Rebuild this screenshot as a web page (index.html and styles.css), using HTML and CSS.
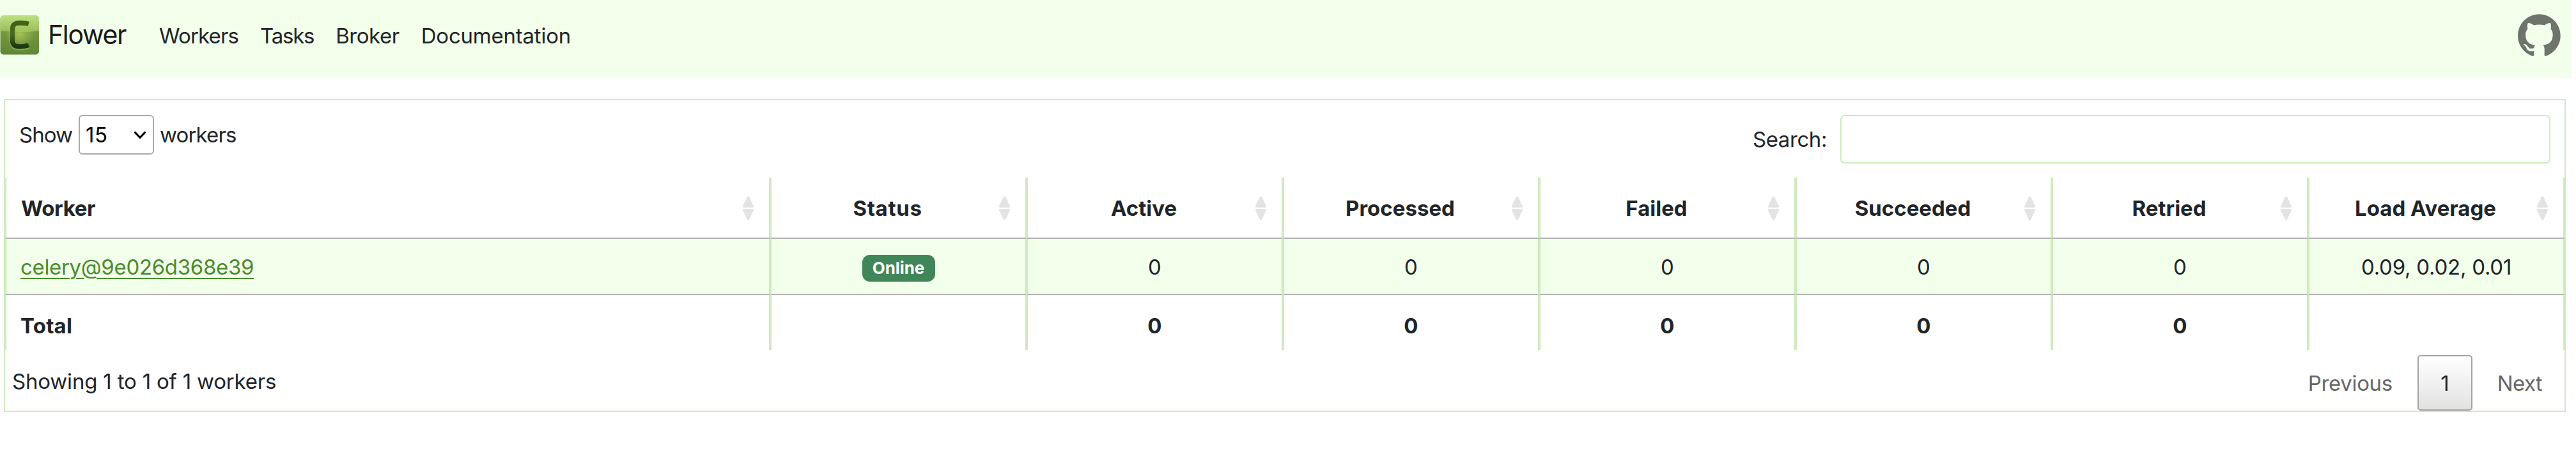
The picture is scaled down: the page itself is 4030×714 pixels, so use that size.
FILE: index.html
```
<!DOCTYPE html>
<html lang="en">
<head>
<meta charset="utf-8">
<title>Flower</title>
<link rel="stylesheet" href="styles.css">
</head>
<body>
<svg class="defs" aria-hidden="true">
  <symbol id="sort" viewBox="0 0 17 38">
    <path d="M8.5 2.5 15 16H2Z M8.5 35.5 15 22H2Z" fill="#e3e3e3" stroke="#e3e3e3" stroke-width="4" stroke-linejoin="round"/>
  </symbol>
</svg>
<nav class="navbar">
  <a class="brand" href="#">
    <svg class="logo" viewBox="0 0 62 64">
      <defs>
        <linearGradient id="top" x1="0" y1="0" x2="0" y2="1"><stop offset="0" stop-color="#bfe283"/><stop offset="1" stop-color="#98bc58"/></linearGradient>
        <linearGradient id="low" x1="0" y1="0" x2="0" y2="1"><stop offset="0" stop-color="#84a544"/><stop offset="1" stop-color="#5f8635"/></linearGradient>
        <radialGradient id="glow"><stop offset="0" stop-color="#aecb5c" stop-opacity=".8"/><stop offset="1" stop-color="#aecb5c" stop-opacity="0"/></radialGradient>
        <linearGradient id="ink" x1="0" y1="0" x2="0" y2="1"><stop offset="0" stop-color="#3f6118"/><stop offset=".45" stop-color="#4a6c20"/><stop offset="1" stop-color="#1f3710"/></linearGradient>
        <clipPath id="tile"><rect x=".5" y="1.5" width="60.5" height="61" rx="5"/></clipPath>
      </defs>
      <g clip-path="url(#tile)">
        <rect width="62" height="64" fill="url(#low)"/>
        <path d="M0 0H62V25Q31 29 0 25Z" fill="url(#top)"/>
        <ellipse cx="31" cy="31" rx="24" ry="19" fill="url(#glow)"/>
      </g>
      <path d="M44.8 15.5C40 14 36 14 31 14C22.5 14 19.5 17 19.5 24V41C19.5 48 22.5 51 31 51C36.5 51 40 50.5 44.8 48.5" fill="none" stroke="#a8cf62" stroke-opacity=".45" stroke-width="9.5"/>
      <path d="M44.8 14.5C40 13 36 13 31 13C22.5 13 19.5 16 19.5 23V40C19.5 47 22.5 50 31 50C36.5 50 40 49.5 44.8 47.5" fill="none" stroke="url(#ink)" stroke-width="7.5"/>
    </svg>
    <span class="brand-name">Flower</span>
  </a>
  <div class="links">
    <a class="t-workers" href="#">Workers</a>
    <a class="t-tasks" href="#">Tasks</a>
    <a class="t-broker" href="#">Broker</a>
    <a class="t-docs" href="#">Documentation</a>
  </div>
  <a class="github" href="#" aria-label="GitHub">
    <svg viewBox="0 0 98 96"><path fill="#6e746b" d="M48.854 0C21.839 0 0 22 0 49.217c0 21.756 13.993 40.172 33.405 46.690 2.427.490 3.316-1.059 3.316-2.362 0-1.141-.080-5.052-.080-9.127-13.590 2.934-16.420-5.867-16.420-5.867-2.184-5.704-5.420-7.170-5.420-7.170-4.448-3.015.324-3.015.324-3.015 4.934.326 7.523 5.052 7.523 5.052 4.367 7.496 11.404 5.378 14.235 4.074.404-3.178 1.699-5.378 3.074-6.600-10.839-1.141-22.243-5.378-22.243-24.283 0-5.378 1.940-9.778 5.014-13.200-.485-1.222-2.184-6.275.486-13.038 0 0 4.125-1.304 13.426 5.052a46.970 46.970 0 0 1 12.214-1.630c4.125 0 8.330.571 12.213 1.630 9.302-6.356 13.427-5.052 13.427-5.052 2.670 6.763.970 11.816.485 13.038 3.155 3.422 5.015 7.822 5.015 13.200 0 18.905-11.404 23.060-22.324 24.283 1.780 1.548 3.316 4.481 3.316 9.126 0 6.600-.080 11.897-.080 13.526 0 1.304.890 2.853 3.316 2.364 19.412-6.520 33.405-24.935 33.405-46.691C97.707 22 75.788 0 48.854 0z"/></svg>
  </a>
</nav>

<main class="panel">
  <div class="toolbar">
    <label class="length">
      <span class="t-show">Show</span>
      <span class="select"><span class="t-num">15</span><svg class="chevron" viewBox="0 0 20 13"><path d="M2.5 2.5 10 10.5 17.5 2.5" fill="none" stroke="#000" stroke-width="3.2" stroke-linecap="round" stroke-linejoin="round"/></svg></span>
      <span class="t-unit">workers</span>
    </label>
    <label class="filter"><span class="t-search">Search:</span><input class="search" type="search"></label>
  </div>

  <table class="workers">
    <colgroup><col class="first"><col><col><col><col><col><col><col></colgroup>
    <thead>
      <tr>
        <th><div class="head left"><span class="t-worker">Worker</span><svg class="sort"><use href="#sort"/></svg></div></th>
        <th><div class="head"><span class="t-status">Status</span><svg class="sort"><use href="#sort"/></svg></div></th>
        <th><div class="head"><span>Active</span><svg class="sort"><use href="#sort"/></svg></div></th>
        <th><div class="head"><span>Processed</span><svg class="sort"><use href="#sort"/></svg></div></th>
        <th><div class="head"><span>Failed</span><svg class="sort"><use href="#sort"/></svg></div></th>
        <th><div class="head"><span>Succeeded</span><svg class="sort"><use href="#sort"/></svg></div></th>
        <th><div class="head"><span>Retried</span><svg class="sort"><use href="#sort"/></svg></div></th>
        <th><div class="head"><span>Load Average</span><svg class="sort"><use href="#sort"/></svg></div></th>
      </tr>
    </thead>
    <tbody>
      <tr>
        <td class="name"><a href="#">celery@9e026d368e39</a></td>
        <td><span class="badge">Online</span></td>
        <td>0</td><td>0</td><td>0</td><td>0</td><td>0</td>
        <td class="load">0.09, 0.02, 0.01</td>
      </tr>
    </tbody>
    <tfoot>
      <tr>
        <td class="name total">Total</td><td></td>
        <td>0</td><td>0</td><td>0</td><td>0</td><td>0</td><td></td>
      </tr>
    </tfoot>
  </table>

  <div class="footer">
    <div class="info">Showing 1 to 1 of 1 workers</div>
    <div class="pager">
      <span class="t-prev">Previous</span>
      <span class="page">1</span>
      <span class="t-next">Next</span>
    </div>
  </div>
</main>
</body>
</html>
```
FILE: styles.css
```
* { box-sizing: border-box; }
body {
  margin: 0;
  background: #fff;
  color: #212529;
  font: 400 33px/40px Inter, "Liberation Sans", sans-serif;
  white-space: nowrap;
}
a { color: inherit; text-decoration: none; }
.defs { display: none; }

.navbar {
  display: flex;
  align-items: flex-start;
  width: 4023px;
  height: 122px;
  background: #f2ffeb;
}
.brand { display: flex; align-items: flex-start; width: 249px; padding-top: 23px; }
.logo { width: 62px; height: 64px; margin-right: 13px; }
.brand-name {
  padding-top: 6px;
  font-size: 41px;
  line-height: 50px;
  letter-spacing: -1.34px;
  color: #1a1a19;
}
.links { display: flex; flex: 1; gap: 34px; padding-top: 36px; }
.github { padding: 22px 17px 0 0; }
.github svg { display: block; width: 67px; height: 66px; }

.panel {
  display: flex;
  flex-direction: column;
  width: 4008px;
  height: 490px;
  margin: 33px 0 0 6px;
  border: 2px solid #cdebbd;
}
.toolbar {
  display: flex;
  justify-content: space-between;
  align-items: flex-start;
  height: 121px;
  padding: 23px 22px 0;
}
.length, .filter { display: flex; align-items: center; }
.select {
  display: flex;
  align-items: center;
  justify-content: space-between;
  width: 118px;
  height: 62px;
  margin: 0 9px 0 10px;
  padding: 0 10px 0 9px;
  border: 2px solid #aaa;
  border-radius: 6px;
  color: #000;
}
.chevron { width: 20px; height: 13px; }
.search {
  width: 1111px;
  height: 76px;
  margin: 0 0 0 21px;
  border: 2px solid #cdebbd;
  border-radius: 7px;
  background: transparent;
}

.workers {
  width: 4004px;
  table-layout: fixed;
  border-collapse: separate;
  border-spacing: 0;
  text-align: center;
}
.first { width: 1197px; }
th, td {
  padding: 0;
  border: 0 solid #cdebbd;
  border-width: 0 2px;
  vertical-align: middle;
}
th { height: 96px; border-bottom: 2px solid #b2b2b2; }
tbody td { height: 86px; padding-top: 2px; background: #f2ffeb; }
tfoot td {
  height: 88px;
  padding-top: 9px;
  border-top: 2px solid #b2b2b2;
  font-weight: 700;
}
.head { display: flex; align-items: center; padding: 1px 24px 0 7px; }
.head span { flex: 1; }
.head.left { padding-left: 23px; text-align: left; }
.sort { width: 17px; height: 38px; }
.name { padding-left: 22px; text-align: left; }
.name a {
  color: #4b8b2c;
  letter-spacing: -.33px;
  text-decoration: underline;
  text-decoration-thickness: 2px;
  text-underline-offset: 5px;
}
.load { letter-spacing: -.25px; }
.total { letter-spacing: .23px; }
.badge {
  display: block;
  width: 114px;
  height: 42px;
  margin: 4px auto 0;
  border-radius: 12px;
  background: #418659;
  color: #fff;
  font-size: 26px;
  font-weight: 700;
  line-height: 42px;
  letter-spacing: -.1px;
}

.footer { display: flex; justify-content: space-between; height: 95px; padding: 8px 35px 0 11px; }
.info { padding-top: 21px; letter-spacing: -.19px; }
.pager { display: flex; align-items: center; height: 87px; gap: 39px; color: #666; }
.page {
  width: 86px;
  height: 87px;
  border: 2px solid #a3a3a3;
  border-radius: 5px;
  background: linear-gradient(#fff, #e2e2e2);
  color: #212529;
  line-height: 84px;
  text-align: center;
}

.t-workers { letter-spacing: -.85px; }
.t-tasks { letter-spacing: -1.24px; }
.t-broker { letter-spacing: -.47px; }
.t-docs { letter-spacing: -.22px; }
.t-show { letter-spacing: -.96px; }
.t-num { letter-spacing: .58px; }
.t-unit { letter-spacing: -.86px; }
.t-search { letter-spacing: -.42px; }
.t-worker { letter-spacing: -.37px; }
.t-status { letter-spacing: .67px; }
.t-prev { letter-spacing: -.34px; }
.t-next { letter-spacing: -.67px; }
```
